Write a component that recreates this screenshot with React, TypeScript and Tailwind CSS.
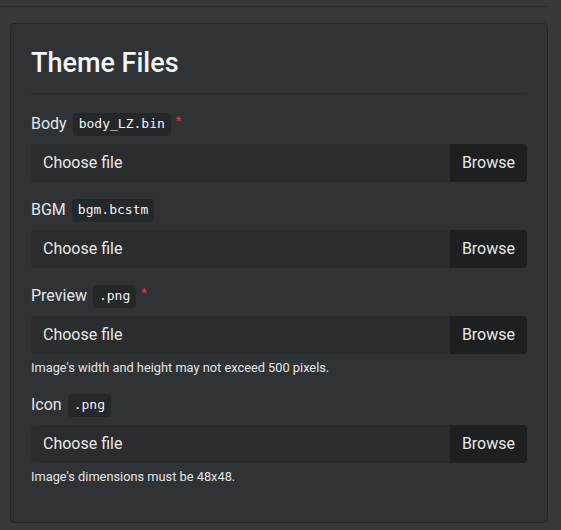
import React from 'react';

interface FileFieldProps {
  label: string;
  ext: string;
  required?: boolean;
  help?: string;
}

function FileField({ label, ext, required, help }: FileFieldProps) {
  return (
    <div className="mb-4">
      <div className="flex items-center h-6 mb-2 text-[16px] text-[#e4e6e8]">
        <span>{label}</span>
        <code className="ml-[6px] px-[6px] h-[23px] flex items-center rounded-[4px] bg-[#25282a] text-[13px] text-[#f4f4f4] font-['DejaVu_Sans_Mono',monospace]">
          {ext}
        </code>
        {required && (
          <span className="ml-[5px] -mt-[6px] text-[13px] text-[#e0394b]">*</span>
        )}
      </div>
      <div className="flex h-[38px] rounded-[4px] overflow-hidden bg-[#2a2c2e] text-[16px] text-[#e6e8ea]">
        <div className="flex-1 flex items-center px-3">Choose file</div>
        <div className="flex items-center px-3 bg-[#1e1f21]">Browse</div>
      </div>
      {help && <div className="mt-1 text-[12.8px] leading-[19px] text-[#e2e4e6]">{help}</div>}
    </div>
  );
}

export default function App() {
  return (
    <div className="min-h-[530px] w-[561px] bg-[#35393c] font-['Roboto',sans-serif] overflow-hidden">
      <div className="h-[7px] w-[549px] border-b border-[#2c3033]" />
      <div className="ml-[10px] mt-[16px] w-[538px] rounded-[4px] border border-[#25282b] bg-[#303336] pl-5 pr-5 pt-5 pb-5">
        <h3 className="text-[27px] leading-[34px] pt-[2px] font-medium text-[#f4f5f6] pb-[13px] border-b border-[#2a2d30] mb-[18px]">
          Theme Files
        </h3>
        <FileField label="Body" ext="body_LZ.bin" required />
        <FileField label="BGM" ext="bgm.bcstm" />
        <FileField
          label="Preview"
          ext=".png"
          required
          help="Image's width and height may not exceed 500 pixels."
        />
        <FileField label="Icon" ext=".png" help="Image's dimensions must be 48x48." />
      </div>
    </div>
  );
}
